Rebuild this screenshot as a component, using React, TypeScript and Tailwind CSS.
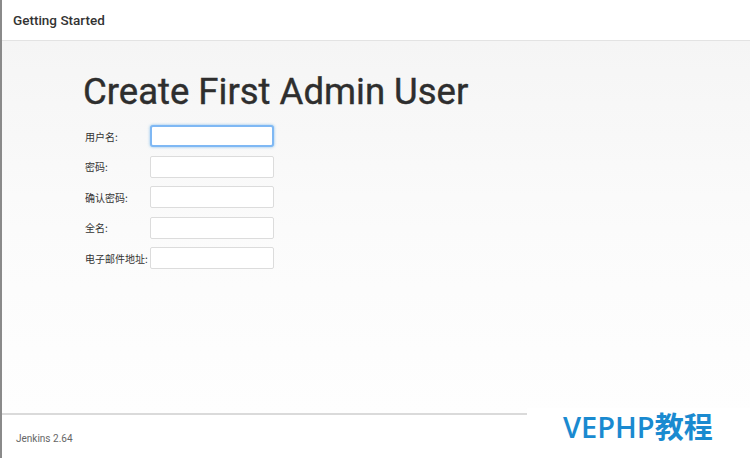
import React from "react";

const fields = ["用户名:", "密码:", "确认密码:", "全名:", "电子邮件地址:"];

export default function App() {
  return (
    <div
      className="relative w-[750px] h-[458px] flex flex-col bg-white border-l-2 border-[#8a8a8a] overflow-hidden"
      style={{ fontFamily: "Roboto, 'Noto Sans CJK SC', sans-serif" }}
    >
      <div className="h-[41px] shrink-0 flex items-center px-[11px] border-b border-[#e3e3e3] bg-white">
        <span className="text-[13.5px] font-medium text-[#333]">Getting Started</span>
      </div>
      <div className="flex-1 bg-gradient-to-b from-[#f5f5f5] via-[#fbfbfb] to-[#fefefe] pl-[81px] pt-[27px]">
        <h1 className="text-[36.5px] leading-[48px] font-normal text-[#2e2e2e] [-webkit-text-stroke:0.4px_#2e2e2e]">
          Create First Admin User
        </h1>
        <div className="mt-[9px] flex flex-col gap-[8.5px]">
          {fields.map((f, i) => (
            <div key={f} className="flex items-center h-[22px]">
              <span
                className="w-[67px] pl-[2px] text-[10px] text-[#333]"
                style={{ fontFamily: "'Noto Sans CJK SC', sans-serif" }}
              >
                {f}
              </span>
              <div
                className={
                  i === 0
                    ? "w-[124px] h-[22px] bg-white border-2 border-[#7fb8f4] rounded-[3px] shadow-[0_0_3px_rgba(102,175,233,0.8)]"
                    : "w-[124px] h-[22px] bg-white border border-[#dcdcdc] rounded-[2px]"
                }
              />
            </div>
          ))}
        </div>
      </div>
      <div className="h-[45px] shrink-0 border-t-2 border-[#dadada] flex items-center px-[14px] bg-white">
        <span className="text-[10px] text-[#666] mt-[3px]">Jenkins 2.64</span>
      </div>
      <div className="absolute right-0 bottom-0 w-[223px] h-[50px] bg-white flex items-start pt-[4px] pl-[36px]">
        <span
          className="text-[29px] font-semibold text-[#1a8ad0] leading-none"
          style={{ fontFamily: "'Open Sans', 'Noto Sans CJK SC', sans-serif" }}
        >
          VEPHP教程
        </span>
      </div>
    </div>
  );
}
